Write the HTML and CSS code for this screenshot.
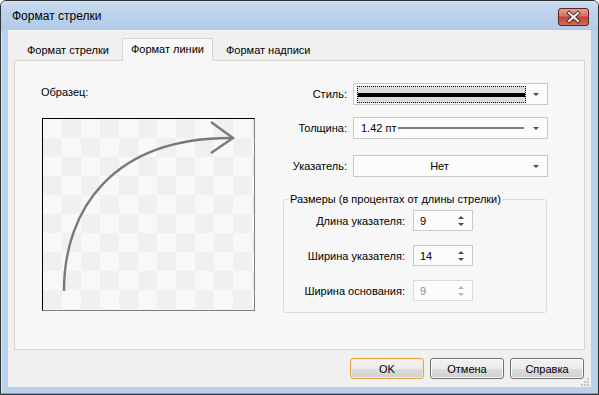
FILE: index.html
```html
<!DOCTYPE html>
<html lang="ru">
<head>
  <meta charset="UTF-8">
  <title>Формат стрелки</title>
  <link rel="stylesheet" href="styles.css">
</head>
<body>
  <div class="window">
    <div class="titlebar">
      <span class="title">Формат стрелки</span>
      <span class="close">
        <svg width="31" height="18" viewBox="0 0 31 18">
          <defs>
            <linearGradient id="closeBg" x1="0" y1="0" x2="0" y2="1">
              <stop offset="0" stop-color="#e8a396"/>
              <stop offset="0.45" stop-color="#d3705f"/>
              <stop offset="0.5" stop-color="#c3412c"/>
              <stop offset="1" stop-color="#d2705b"/>
            </linearGradient>
          </defs>
          <rect x="0.5" y="0.5" width="30" height="17" rx="2.5" fill="url(#closeBg)" stroke="#5b2420"/>
          <path d="M11 5 L20 13 M20 5 L11 13" stroke="#4b2a26" stroke-width="4" stroke-linecap="square"/>
          <path d="M11 5 L20 13 M20 5 L11 13" stroke="#f2f2f2" stroke-width="2.2" stroke-linecap="square"/>
        </svg>
      </span>
    </div>

    <div class="client">
      <div class="tabs">
        <span class="tab">Формат стрелки</span>
        <span class="tab active">Формат линии</span>
        <span class="tab">Формат надписи</span>
      </div>

      <div class="panel">
        <div class="sample">
          <div class="caption">Образец:</div>
          <div class="preview">
            <svg width="211" height="191" viewBox="0 0 211 191">
              <path d="M21 172 C21 90 70 18 190 19" fill="none" stroke="#7a7a7a" stroke-width="2.4"/>
              <path d="M168 3 L190 19 L168 34" fill="none" stroke="#7a7a7a" stroke-width="2.4"/>
            </svg>
          </div>
        </div>

        <div class="props">
          <div class="prop-row">
            <label class="prop-label">Стиль:</label>
            <div class="combo">
              <div class="line-sample"><div class="line-thick"></div></div>
              <span class="drop"></span>
            </div>
          </div>
          <div class="prop-row gap-12">
            <label class="prop-label">Толщина:</label>
            <div class="combo">
              <span class="combo-text">1.42 пт</span>
              <span class="line-thin"></span>
              <span class="drop"></span>
            </div>
          </div>
          <div class="prop-row gap-16">
            <label class="prop-label">Указатель:</label>
            <div class="combo">
              <span class="combo-text centered">Нет</span>
              <span class="drop"></span>
            </div>
          </div>

          <fieldset class="sizes">
            <legend>Размеры (в процентах от длины стрелки)</legend>
            <div class="spin-grid">
              <label class="spin-label">Длина указателя:</label>
              <div class="spin"><span>9</span><span class="arrows"><i class="up"></i><i class="down"></i></span></div>
              <label class="spin-label">Ширина указателя:</label>
              <div class="spin"><span>14</span><span class="arrows"><i class="up"></i><i class="down"></i></span></div>
              <label class="spin-label">Ширина основания:</label>
              <div class="spin disabled"><span>9</span><span class="arrows"><i class="up"></i><i class="down"></i></span></div>
            </div>
          </fieldset>
        </div>
      </div>

      <div class="actions">
        <button class="btn default">OK</button>
        <button class="btn">Отмена</button>
        <button class="btn">Справка</button>
      </div>

      <svg class="grip" width="8" height="8" viewBox="0 0 8 8">
        <rect x="6" y="0" width="2" height="2" fill="#c2c2c2"/>
        <rect x="3" y="3" width="2" height="2" fill="#c2c2c2"/>
        <rect x="6" y="3" width="2" height="2" fill="#c2c2c2"/>
        <rect x="0" y="6" width="2" height="2" fill="#c2c2c2"/>
        <rect x="3" y="6" width="2" height="2" fill="#c2c2c2"/>
        <rect x="6" y="6" width="2" height="2" fill="#c2c2c2"/>
      </svg>
    </div>
  </div>
</body>
</html>
```

FILE: styles.css
```css
body {
  margin: 0;
  font-family: "Liberation Sans", Arial, sans-serif;
  font-size: 11px;
  color: #000;
  background: #fff;
}

.window {
  width: 599px;
  height: 395px;
  box-sizing: border-box;
  border: 1px solid #2e3338;
  border-radius: 6px 6px 0 0;
  padding: 0 7px 7px 7px;
  background: #b9d1ea;
  box-shadow: inset 0 -1px 0 #38c0e8, inset 1px 0 0 #d9e7f5;
}

.titlebar {
  height: 29px;
  margin: 0 -7px;
  padding: 0 9px 0 11px;
  display: flex;
  align-items: center;
  justify-content: space-between;
  border-radius: 5px 5px 0 0;
  background: linear-gradient(#cfdff1, #bcd2ec 40%, #b3cbe8 100%);
}

.title {
  font-size: 12px;
  color: #000;
}

.close {
  display: flex;
  margin-top: 2px;
}

.client {
  position: relative;
  height: 357px;
  box-sizing: border-box;
  background: #f0f0f0;
  padding-top: 8px;
}

.tabs {
  display: flex;
  align-items: flex-end;
  height: 22px;
  padding-left: 11px;
  gap: 5px;
}

.tab {
  height: 20px;
  line-height: 20px;
  padding: 0 8px;
  white-space: nowrap;
}

.tab.active {
  height: 22px;
  line-height: 21px;
  margin-bottom: -1px;
  border: 1px solid #d6d6d0;
  border-bottom: none;
  background: #f7f7f7;
  position: relative;
  z-index: 1;
}

.panel {
  display: flex;
  height: 290px;
  margin: 0 6px;
  box-sizing: border-box;
  border: 1px solid #d6d6ce;
  background: #f7f7f7;
}

.sample {
  width: 268px;
  padding: 25px 0 0 26px;
  box-sizing: border-box;
}

.caption {
  height: 13px;
  line-height: 13px;
}

.preview {
  width: 213px;
  height: 193px;
  margin-top: 19px;
  margin-left: 1px;
  box-sizing: border-box;
  border: 1px solid;
  border-color: #000 #808080 #808080 #000;
  background: repeating-conic-gradient(#f0f0f0 0 25%, #f8f8f8 0 50%) 0 0 / 38px 38px;
}

.preview svg {
  display: block;
}

.props {
  width: 265px;
  padding-top: 22px;
}

.prop-row {
  display: grid;
  grid-template-columns: 64px 195px;
  gap: 6px;
  align-items: center;
}

.gap-12 {
  margin-top: 12px;
}

.gap-16 {
  margin-top: 16px;
}

.prop-label {
  text-align: right;
  white-space: nowrap;
}

.combo {
  height: 22px;
  box-sizing: border-box;
  border: 1px solid #c9c9c9;
  background: #fcfcfc;
  display: flex;
  align-items: center;
  position: relative;
}

.line-sample {
  width: 169px;
  height: 17px;
  margin-left: 3px;
  box-sizing: border-box;
  border: 1px dotted #000;
  background: #dcdcdc;
  display: flex;
  align-items: center;
}

.line-thick {
  width: 100%;
  height: 4px;
  margin-top: 2px;
  background: #000;
}

.combo-text {
  padding-left: 7px;
  white-space: nowrap;
}

.combo-text.centered {
  flex: 1;
  padding-left: 0;
  padding-right: 22px;
  text-align: center;
}

.line-thin {
  width: 126px;
  height: 2px;
  margin-left: 2px;
  background: #7d7d7d;
}

.drop {
  position: absolute;
  right: 8px;
  top: 9px;
  width: 0;
  height: 0;
  border-left: 3px solid transparent;
  border-right: 3px solid transparent;
  border-top: 3px solid #4a4a4a;
}

.sizes {
  margin: 16px 0 0 0;
  width: 264px;
  height: 120px;
  box-sizing: border-box;
  padding: 4px 0 0 0;
  border: 1px solid #d5dde4;
  border-radius: 3px;
}

.sizes legend {
  padding: 0 2px;
  margin-left: 4px;
  line-height: 13px;
}

.spin-grid {
  display: grid;
  grid-template-columns: 121px 60px;
  column-gap: 8px;
  row-gap: 14px;
  align-items: center;
}

.spin-label {
  text-align: right;
  white-space: nowrap;
}

.spin {
  height: 21px;
  box-sizing: border-box;
  border: 1px solid #c9c9c9;
  background: #fcfcfc;
  display: flex;
  align-items: center;
  justify-content: space-between;
  padding-left: 6px;
}

.spin.disabled {
  border-color: #dadada;
  color: #8d8d8d;
}

.arrows {
  display: flex;
  flex-direction: column;
  gap: 4px;
  margin-right: 8px;
}

.arrows i {
  display: block;
  width: 0;
  height: 0;
  border-left: 3px solid transparent;
  border-right: 3px solid transparent;
}

.arrows .up {
  border-bottom: 3px solid #4a4a4a;
}

.arrows .down {
  border-top: 3px solid #4a4a4a;
}

.spin.disabled .arrows .up {
  border-bottom-color: #b5b5b5;
}

.spin.disabled .arrows .down {
  border-top-color: #b5b5b5;
}

.actions {
  display: flex;
  justify-content: flex-end;
  gap: 6px;
  padding: 8px 7px 0 0;
}

.btn {
  width: 74px;
  height: 21px;
  padding: 0;
  font-family: inherit;
  font-size: 11px;
  color: #000;
  border: 1px solid #707070;
  border-radius: 3px;
  background: linear-gradient(#f2f2f2 0, #ebebeb 50%, #dddddd 51%, #cfcfcf 100%);
  box-shadow: inset 0 0 0 1px #fbfbfb;
}

.btn.default {
  border-color: #e3a448;
  box-shadow: inset 0 0 0 1px #fbe6c3;
}

.grip {
  position: absolute;
  right: 2px;
  bottom: 1px;
}
```
